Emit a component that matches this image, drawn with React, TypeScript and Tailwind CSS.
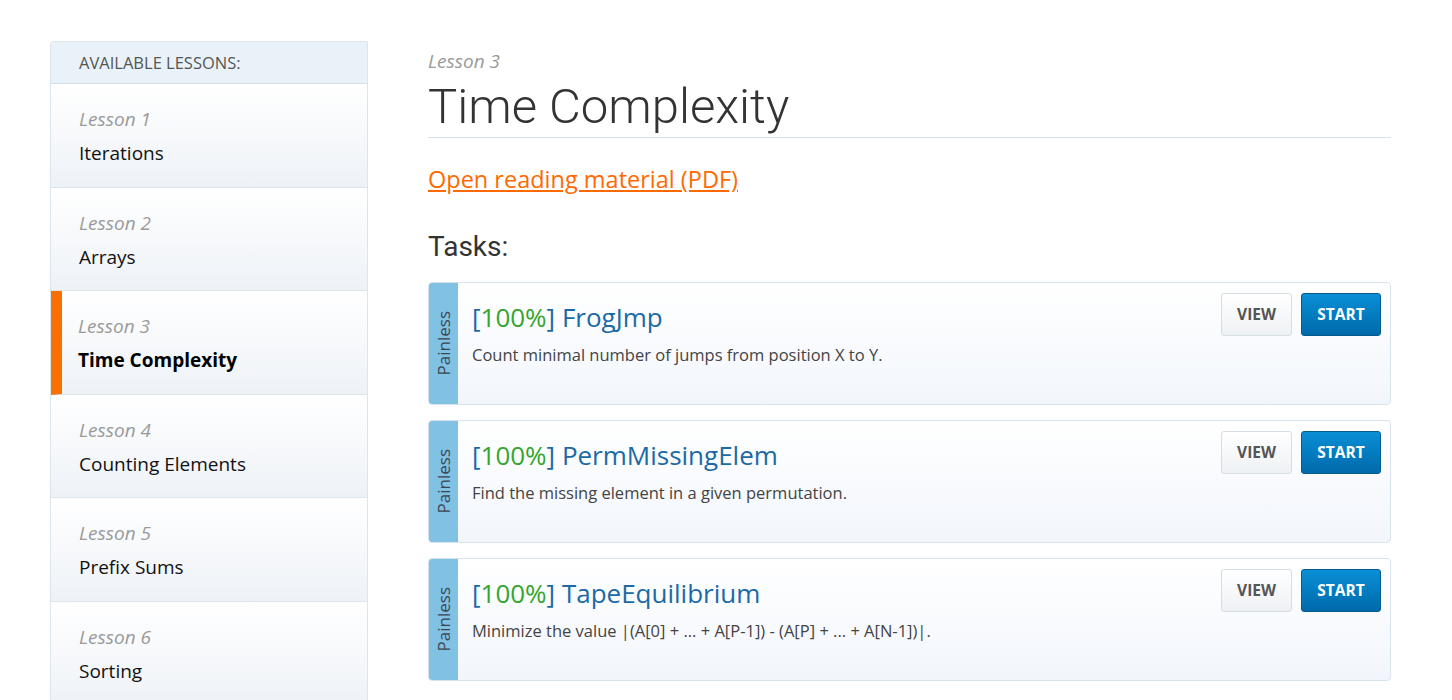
import React from 'react';

const LESSONS = [
	{ n: 1, title: 'Iterations' },
	{ n: 2, title: 'Arrays' },
	{ n: 3, title: 'Time Complexity' },
	{ n: 4, title: 'Counting Elements' },
	{ n: 5, title: 'Prefix Sums' },
	{ n: 6, title: 'Sorting' }
];

const TASKS = [
	{ name: 'FrogJmp', desc: 'Count minimal number of jumps from position X to Y.' },
	{ name: 'PermMissingElem', desc: 'Find the missing element in a given permutation.' },
	{ name: 'TapeEquilibrium', desc: 'Minimize the value |(A[0] + ... + A[P-1]) - (A[P] + ... + A[N-1])|.' }
];

const ACTIVE = 3;

function LessonItem({ n, title }: { n: number; title: string }) {
	const active = n === ACTIVE;
	return (
		<div
			className={`border-b border-[#dbe5ee] bg-gradient-to-b from-white to-[#eef2f7] pt-[21px] pb-[19.5px] ${
				active ? 'border-l-[11px] border-l-[#f97000] pl-[16px]' : 'pl-[28px]'
			}`}
		>
			<div className="text-[19px] leading-[28px] italic text-[#9a9a9a]">Lesson {n}</div>
			<div className={`mt-[6px] text-[19px] leading-[28px] ${active ? 'font-bold text-black' : 'text-[#111]'}`}>
				{title}
			</div>
		</div>
	);
}

function TaskCard({ name, desc }: { name: string; desc: string }) {
	return (
		<div className="flex h-[123px] overflow-hidden rounded-[4px] border border-[#d8e3ec] bg-gradient-to-b from-white to-[#f2f6fc]">
			<div className="flex w-[29px] shrink-0 items-center justify-center bg-[#80c1e4]">
				<span className="rotate-180 text-[17px] text-[#3c4650] [writing-mode:vertical-rl]">Painless</span>
			</div>
			<div className="flex min-w-0 flex-1 justify-between pl-[14px] pr-[9px]">
				<div className="pt-[17px]">
					<div className="text-[26px] leading-[34px] text-[#1b6aa5]">
						[<span className="text-[#35a52e]">100%</span>] {name}
					</div>
					<div className="mt-[10px] text-[16.5px] leading-[22px] text-[#444]">{desc}</div>
				</div>
				<div className="flex gap-[9px] pt-[10px]">
					<button
						type="button"
						className="h-[43px] w-[71px] rounded-[3px] border border-[#d5dde5] bg-gradient-to-b from-white to-[#eef1f4] text-[15.5px] font-bold text-[#555]"
					>
						VIEW
					</button>
					<button
						type="button"
						className="h-[43px] w-[80px] rounded-[3px] border border-[#075a8e] bg-gradient-to-b from-[#0a8fd6] to-[#006aaa] text-[15.5px] font-bold text-white"
					>
						START
					</button>
				</div>
			</div>
		</div>
	);
}

export default function App() {
	return (
		<div className="flex min-h-[700px] gap-[60px] bg-white pl-[50px] pt-[41px] font-['Open_Sans',sans-serif]">
			<div className="w-[318px] shrink-0 overflow-hidden rounded-tl-[4px] rounded-tr-[2px] border-x border-t border-[#dbe5ee]">
				<div className="h-[42px] border-b border-[#d5e2ec] bg-[#e9f2f9] pl-[28px] text-[16.5px] leading-[41px] text-[#555]">
					AVAILABLE LESSONS:
				</div>
				{LESSONS.map((l) => (
					<LessonItem key={l.n} n={l.n} title={l.title} />
				))}
			</div>

			<div className="w-[963px] shrink-0 pt-[8px]">
				<div className="text-[19px] leading-[24px] italic text-[#9a9a9a]">Lesson 3</div>
				<h1 className="mt-[6px] border-b border-[#d5e2ec] pb-[2px] font-['Roboto',sans-serif] text-[49px] font-light leading-[56px] text-[#333]">
					Time Complexity
				</h1>
				<div className="mt-[26px] leading-[30px]">
					<a href="#" className="text-[23.5px] text-[#ff6a00] underline">
						Open reading material (PDF)
					</a>
				</div>
				<h2 className="mt-[34px] font-['Roboto',sans-serif] text-[28px] leading-[32px] text-[#333]">Tasks:</h2>
				<div className="mt-[19px] flex flex-col gap-[15px]">
					{TASKS.map((t) => (
						<TaskCard key={t.name} name={t.name} desc={t.desc} />
					))}
				</div>
			</div>
		</div>
	);
}
